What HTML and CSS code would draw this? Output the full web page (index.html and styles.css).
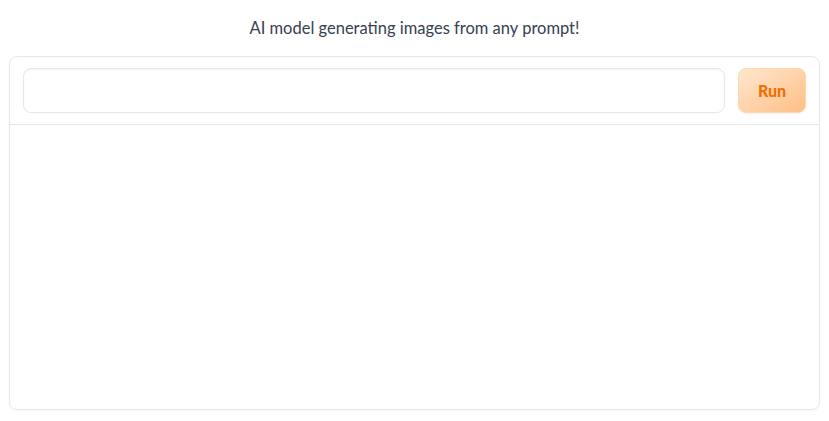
FILE: index.html
```html
<!DOCTYPE html>
<html>
<head>
<meta charset="utf-8">
<link rel="stylesheet" href="styles.css">
</head>
<body>
<div class="page">
  <p class="title">AI model generating images from any prompt!</p>
  <div class="panel">
    <div class="row">
      <div class="input-wrap"><input class="prompt" type="text"></div>
      <button class="run">Run</button>
    </div>
    <div class="output"></div>
  </div>
</div>
</body>
</html>
```
FILE: styles.css
```css
html, body {
  margin: 0;
  padding: 0;
  background: #ffffff;
  font-family: "Source Sans Pro", "Lato", "Noto Sans", sans-serif;
}
.page {
  width: 829px;
  height: 421px;
  box-sizing: border-box;
  padding: 16px 9px 0 9px;
}
.title {
  margin: 0 0 16px 0;
  text-align: center;
  font-size: 16.5px;
  line-height: 24px;
  color: #374151;
}
.panel {
  border: 1px solid #e5e7eb;
  border-radius: 8px;
  height: 354px;
  box-sizing: border-box;
  display: flex;
  flex-direction: column;
  box-shadow: 0 1px 2px rgba(0,0,0,0.04);
}
.row {
  display: flex;
  gap: 13px;
  padding: 11px 13px 11px 13px;
  border-bottom: 1px solid #e5e7eb;
}
.input-wrap {
  flex: 1;
}
.prompt {
  width: 100%;
  height: 45px;
  box-sizing: border-box;
  border: 1px solid #e5e7eb;
  border-radius: 8px;
  box-shadow: inset 0 1px 2px rgba(0,0,0,0.05);
  outline: none;
  background: #fff;
}
.run {
  width: 68px;
  height: 45px;
  border: 1px solid #fed7aa;
  border-radius: 8px;
  background: linear-gradient(to bottom right, #ffe7cf, #ffbf85);
  color: #ee6f05;
  font-family: inherit;
  font-weight: 900;
  font-size: 16px;
  box-shadow: 0 1px 2px rgba(0,0,0,0.05);
}
.output {
  flex: 1;
}
```
